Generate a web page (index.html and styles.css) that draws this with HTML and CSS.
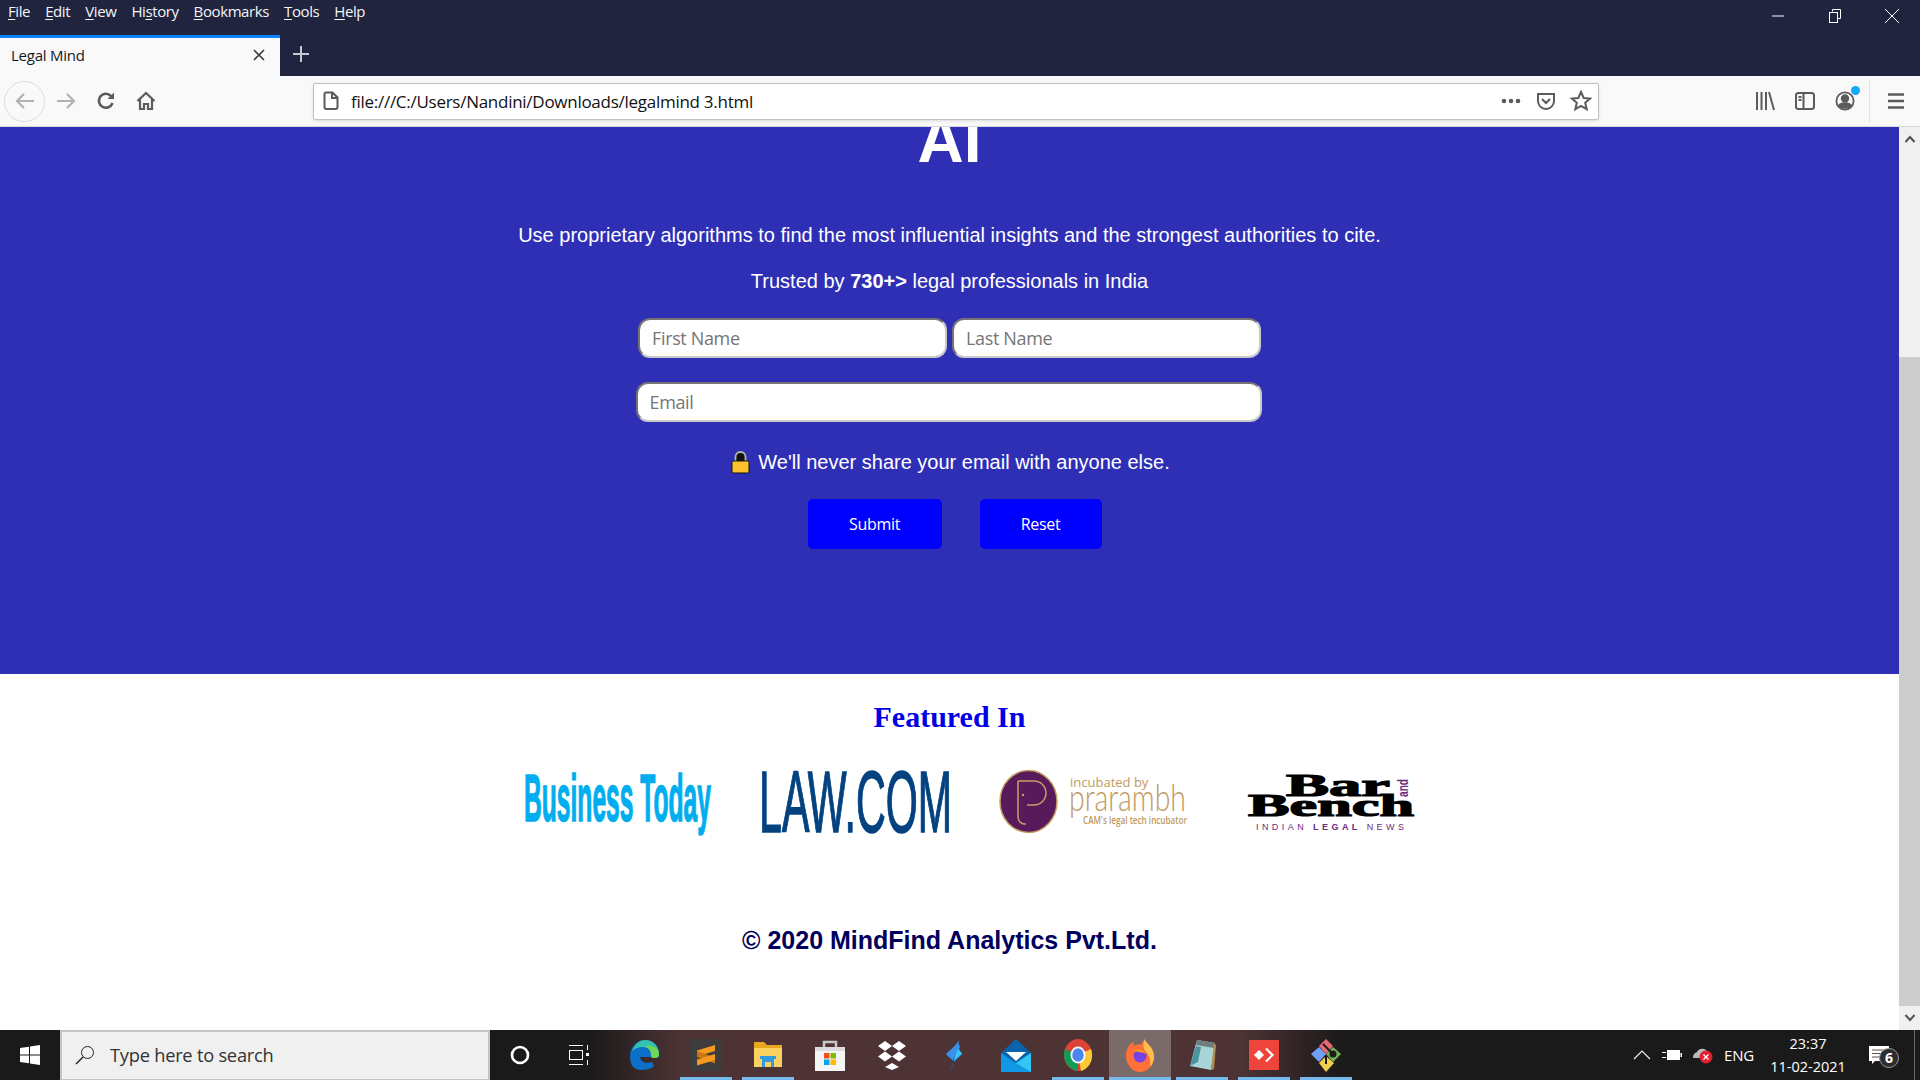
FILE: index.html
```html
<!DOCTYPE html>
<html lang="en">
<head>
<meta charset="utf-8">
<title>Legal Mind</title>
<link rel="stylesheet" href="styles.css">
</head>
<body>
<header class="menubar">
  <nav class="menus">
    <span><u>F</u>ile</span><span><u>E</u>dit</span><span><u>V</u>iew</span><span>Hi<u>s</u>tory</span><span><u>B</u>ookmarks</span><span><u>T</u>ools</span><span><u>H</u>elp</span>
  </nav>
  <div class="winctl">
    <svg width="16" height="16" viewBox="0 0 16 16"><path d="M2 8h12" stroke="#fff"/></svg>
    <svg width="16" height="16" viewBox="0 0 16 16" fill="none" stroke="#fff"><path d="M5.500 3.500V1.500h8v9h-3"/><rect x="2.500" y="4.500" width="8" height="10" fill="#20243f"/></svg>
    <svg width="16" height="16" viewBox="0 0 16 16"><path d="M1 1l14 14M15 1L1 15" stroke="#fff"/></svg>
  </div>
</header>
<div class="tabbar">
  <div class="tab">
    <span class="tab-title">Legal Mind</span>
    <svg width="14" height="14" viewBox="0 0 14 14"><path d="M2 2l10 10M12 2L2 12" stroke="#3a3a3c" stroke-width="1.600"/></svg>
  </div>
  <svg class="newtab" width="18" height="18" viewBox="0 0 18 18"><path d="M9 1v16M1 9h16" stroke="#c8c9d0" stroke-width="2"/></svg>
</div>
<div class="toolbar">
  <div class="navbtns">
    <span class="backring"><svg width="22" height="20" viewBox="0 0 22 20" fill="none" stroke="#b1b1b3" stroke-width="2.200"><path d="M20 10H3M10 3l-7 7 7 7"/></svg></span>
    <svg width="22" height="20" viewBox="0 0 22 20" fill="none" stroke="#b1b1b3" stroke-width="2.200"><path d="M2 10h17M12 3l7 7-7 7"/></svg>
    <svg width="20" height="20" viewBox="0 0 20 20" fill="none" stroke="#5b5b5d" stroke-width="2.600"><path d="M16.500 12a7 7 0 1 1-1.600-7.200L17 7"/><path d="M18 1.500V8h-6.500z" fill="#5b5b5d" stroke="none"/></svg>
    <svg width="20" height="20" viewBox="0 0 20 20" fill="none" stroke="#5b5b5d" stroke-width="2.200"><path d="M1.500 10L10 2l8.500 8M4 8v10h4v-5h4v5h4V8"/></svg>
  </div>
  <div class="urlbar">
    <svg width="16" height="20" viewBox="0 0 16 20" fill="none" stroke="#5b5b5d" stroke-width="2"><path d="M3 1.500h6.500L14.500 6.500V16a2 2 0 0 1-2 2h-9a2 2 0 0 1-2-2V3a1.500 1.500 0 0 1 1.500-1.500zM9 1.500V7h5.500"/></svg>
    <span class="url">file:///C:/Users/Nandini/Downloads/legalmind 3.html</span>
    <div class="url-actions">
      <svg width="20" height="6" viewBox="0 0 20 6" fill="#5b5b5d"><circle cx="3" cy="3" r="2.300"/><circle cx="10" cy="3" r="2.300"/><circle cx="17" cy="3" r="2.300"/></svg>
      <svg width="20" height="20" viewBox="0 0 20 20" fill="none" stroke="#5b5b5d" stroke-width="2"><path d="M2 3h16v7a8 8 0 0 1-16 0zM6 8l4 4 4-4"/></svg>
      <svg width="22" height="22" viewBox="0 0 22 22" fill="none" stroke="#5b5b5d" stroke-width="2"><path d="M11 2l2.700 6 6.300.6-4.800 4.200 1.500 6.400L11 15.800l-5.700 3.400 1.500-6.400L2 8.600 8.300 8z"/></svg>
    </div>
  </div>
  <div class="tools">
    <svg width="20" height="20" viewBox="0 0 20 20" stroke="#5b5b5d" stroke-width="2"><path d="M2 1v18M6.500 1v18M11 1v18M14 1l5 18"/></svg>
    <svg width="20" height="20" viewBox="0 0 20 20" fill="none" stroke="#5b5b5d" stroke-width="2"><rect x="1" y="2" width="18" height="16" rx="2.500"/><path d="M8.500 2v16M3.500 6h3M3.500 9h3"/></svg>
    <span class="account"><svg width="20" height="22" viewBox="0 0 20 22" fill="none" stroke="#5b5b5d" stroke-width="1.800"><circle cx="10" cy="11" r="8.600"/><circle cx="10" cy="8.500" r="3.300" fill="#5b5b5d"/><path d="M4 15.500c2-3 10-3 12 0-2 3-10 3-12 0z" fill="#5b5b5d"/></svg><i class="dot"></i></span>
    <i class="sep"></i>
    <svg width="18" height="18" viewBox="0 0 18 18" stroke="#5b5b5d" stroke-width="2.400"><path d="M1 2.500h16M1 9h16M1 15.500h16"/></svg>
  </div>
</div>
<main class="viewport">
  <div class="page">
    <section class="hero">
      <h1>AI</h1>
      <p class="lead">Use proprietary algorithms to find the most influential insights and the strongest authorities to cite.</p>
      <p class="trust">Trusted by <b>730+&gt;</b> legal professionals in India</p>
      <form class="signup">
        <div class="name-row">
          <input class="field" type="text" placeholder="First Name">
          <input class="field" type="text" placeholder="Last Name">
        </div>
        <input class="field email" type="text" placeholder="Email">
      </form>
      <p class="privacy">
        <svg width="19" height="24" viewBox="0 0 19 24"><path d="M4.500 12V7a5 5 0 0 1 10 0v5" fill="#111" stroke="#b7b7a8" stroke-width="1.800"/><rect x="1" y="11" width="17" height="12" rx="1.500" fill="#fcc22d" stroke="#111"/></svg>
        <span>We'll never share your email with anyone else.</span>
      </p>
      <div class="actions">
        <button class="btn submit" type="button">Submit</button>
        <button class="btn reset" type="button">Reset</button>
      </div>
    </section>
    <section class="featured">
      <h2>Featured In</h2>
      <div class="logos">
        <svg class="logo" viewBox="0 0 190 80"><text class="lg-bt" x="2" y="57" textLength="187" lengthAdjust="spacingAndGlyphs">Business Today</text></svg>
        <svg class="logo" viewBox="0 0 190 80"><text class="lg-law" x="-1" y="68" textLength="193" lengthAdjust="spacingAndGlyphs">LAW.COM</text></svg>
        <svg class="logo" viewBox="0 0 190 80">
          <ellipse cx="30.500" cy="37.500" rx="28.500" ry="31" fill="#591a5b" stroke="#c4a064" stroke-width="1.500"/>
          <path d="M20 17h16a12 12 0 0 1 0 24h-7M20 17v36a7 7 0 0 0 8 7" fill="none" stroke="#c4a064" stroke-width="1.500"/>
          <circle cx="25" cy="31" r="1.200" fill="#c4a064"/>
          <text class="lg-inc" x="72" y="23">incubated by</text>
          <text class="lg-pra" x="71" y="47" textLength="117" lengthAdjust="spacingAndGlyphs">prarambh</text>
          <text class="lg-cam" x="85" y="60" textLength="104" lengthAdjust="spacingAndGlyphs">CAM's legal tech incubator</text>
        </svg>
        <svg class="logo" viewBox="0 0 190 80">
          <text class="lg-bar" x="50" y="32" textLength="104" lengthAdjust="spacingAndGlyphs">Bar</text>
          <text class="lg-bar" x="12" y="52" textLength="166" lengthAdjust="spacingAndGlyphs">Bench</text>
          <text class="lg-and" transform="translate(172 33) rotate(-90)" textLength="18" lengthAdjust="spacingAndGlyphs">and</text>
          <text class="lg-news" x="20" y="66" textLength="150">INDIAN <tspan class="lg-legal">LEGAL</tspan> NEWS</text>
        </svg>
      </div>
      <p class="copyright">© 2020 MindFind Analytics Pvt.Ltd.</p>
    </section>
  </div>
  <aside class="scrollbar">
    <svg class="arrow" width="12" height="8" viewBox="0 0 12 8"><path d="M1.500 7L6 2l4.500 5" fill="none" stroke="#505050" stroke-width="2"/></svg>
    <div class="track"><div class="thumb"></div></div>
    <svg class="arrow" width="12" height="8" viewBox="0 0 12 8"><path d="M1.500 1L6 6l4.500-5" fill="none" stroke="#505050" stroke-width="2"/></svg>
  </aside>
</main>
<footer class="taskbar">
  <div class="start"><svg width="20" height="20" viewBox="0 0 20 20" fill="#fff"><path d="M0 3l9-1.300V9.500H0zM10 1.500L20 0v9.500H10zM0 10.500h9v7.800L0 17zM10 10.500h10V20l-10-1.500z"/></svg></div>
  <div class="search">
    <svg width="20" height="20" viewBox="0 0 20 20" fill="none" stroke="#222"><circle cx="12.500" cy="7.500" r="6"/><path d="M8 12L1 19" stroke-width="1.400"/></svg>
    <span>Type here to search</span>
  </div>
  <div class="sysbtn"><svg width="22" height="22" viewBox="0 0 22 22" fill="none" stroke="#fff" stroke-width="2.600"><circle cx="11" cy="11" r="8"/></svg></div>
  <div class="sysbtn"><svg width="22" height="22" viewBox="0 0 22 22" fill="none" stroke="#fff"><path d="M1 1.500h14M1 20.500h14M19.500 1v5M19.500 16v5"/><rect x="1.500" y="6.500" width="13" height="9"/><rect x="18" y="9" width="3" height="3" fill="#fff" stroke="none"/></svg></div>
  <div class="apps">
    <div class="app"><svg width="32" height="32" viewBox="0 0 32 32"><path d="M2 18C2 7 10 1 17 1c8 0 14 6 14 14v3H12c1 5 6 7 12 5l2 4c-3 3-8 4-13 4C6 31 2 26 2 18z" fill="#0c70c8"/><path d="M4 12C7 4 13 1 17 1c8 0 14 6 14 14 0 3-2 4-5 4-3 0-3-2-3-4 0-4-4-7-8-7-5 0-9 2-11 4z" fill="#35c1b1"/><path d="M31 15c0 3-2 4-5 4-3 0-3-2-3-4 0-4-3-7-7-8 8-2 15 2 15 8z" fill="#6fd64f"/></svg></div>
    <div class="app open"><svg width="32" height="32" viewBox="0 0 32 32"><rect width="32" height="32" rx="3" fill="#3d3d3d"/><path d="M7 11.500L25 6v6L7 17.500z" fill="#f49a1c"/><path d="M7 12l18 6.500v6L7 18z" fill="#c9760f"/><path d="M7 20.500L25 15v6L7 26.500z" fill="#f49a1c"/></svg></div>
    <div class="app open"><svg width="30" height="30" viewBox="0 0 30 30"><path d="M1 2h10l3 3h15v22H1z" fill="#e9a71d"/><path d="M1 8h28v19H1z" fill="#fbd25f"/><path d="M9 27V18h12v9h-3v-5h-6v5z" fill="#2f9ae0"/><path d="M7 16h16v3H7z" fill="#2f9ae0"/></svg></div>
    <div class="app"><svg width="30" height="32" viewBox="0 0 30 32"><path d="M9 8V3h12v5" fill="none" stroke="#c7c7c7" stroke-width="2.500"/><path d="M0 8h30v24H0z" fill="#f5f5f5"/><rect y="8" width="30" height="4" fill="#dcdcdc"/><rect x="9" y="14" width="5.500" height="5.500" fill="#f25022"/><rect x="15.500" y="14" width="5.500" height="5.500" fill="#7fba00"/><rect x="9" y="20.500" width="5.500" height="5.500" fill="#00a4ef"/><rect x="15.500" y="20.500" width="5.500" height="5.500" fill="#ffb900"/></svg></div>
    <div class="app"><svg width="30" height="30" viewBox="0 0 30 30" fill="#fff"><path d="M8 1l7 5-7 5-7-5zM22 1l7 5-7 5-7-5zM8 11.500l7 5-7 5-7-5zM22 11.500l7 5-7 5-7-5zM15 23l7 4-7 3-7-3z"/></svg></div>
    <div class="app"><svg width="16" height="32" viewBox="0 0 16 32"><path d="M13 0C12 5 6 9 0 15c2 3 5 4 7 7 1-5 5-8 7-14-1-2-2-5-1-8z" fill="#3a8fe8"/><path d="M4 32c1-6 6-11 12-17-1-2-3-4-4-6-1 5-4 9-4 13 0 4-3 6-4 10z" fill="#2275d8"/><path d="M12 9c1 2 3 4 4 6-4 4-7 5-8 7 0-4 3-8 4-13z" fill="#35c6f4"/></svg></div>
    <div class="app"><svg width="30" height="34" viewBox="0 0 30 34"><path d="M0 15L15 1l15 14v19H0z" fill="#0b62ad"/><path d="M5 14h20L15 23z" fill="#fff"/><path d="M0 15l15 10 15-10v19H0z" fill="#1296e6"/><path d="M15 25l15-10v19z" fill="#31c6f5"/></svg></div>
    <div class="app open"><svg width="30" height="32" viewBox="0 0 30 32"><ellipse cx="15" cy="16" rx="14" ry="16" fill="#db4437"/><path d="M15 16L2 10C-1 18 3 30 15 32z" fill="#109d58"/><path d="M15 16l3 16c10-3 13-14 10-22z" fill="#fcc934"/><ellipse cx="15" cy="16" rx="7.500" ry="8.500" fill="#fff"/><ellipse cx="15" cy="16" rx="5.800" ry="6.800" fill="#4f86ec"/></svg></div>
    <div class="app open active"><svg width="30" height="34" viewBox="0 0 30 34"><path d="M1 18C1 10 5 5 9 4c-1 2-1 3 0 4 3-2 5-2 7-1 1-2 2-4 4-6 0 2 1 3 4 6 3 3 5 7 5 12 0 8-6 15-14 15S1 26 1 18z" fill="#ff7139"/><path d="M20 1c0 2 1 3 4 6 3 3 5 7 5 12 0 4-2 8-4 10 1-6 0-12-5-16-2-3-2-8 0-12z" fill="#ffbd4f"/><circle cx="15" cy="18" r="6.500" fill="#7542e5"/><path d="M8 13c5-3 11-2 13 3-4-2-8-2-13-3z" fill="#ff980e"/></svg></div>
    <div class="app open"><svg width="28" height="34" viewBox="0 0 28 34"><path d="M9 2l18 3-4 27-21-4z" fill="#a8d5d8"/><path d="M9 2l18 3-1 5-18-3z" fill="#6d7d80"/><path d="M8 8L2 28l8-4 3-15z" fill="#4a93a0"/><path d="M26 6l-3 26 3-1 2-24z" fill="#b58e4c"/></svg></div>
    <div class="app open"><svg width="30" height="30" viewBox="0 0 30 30"><rect width="30" height="30" fill="#ef443b"/><path d="M5 15l5-5 5 5-5 5z" fill="#fff"/><path d="M16 9l6 6-6 6 2 1 7-7-7-7z" fill="#fff"/></svg></div>
    <div class="app open"><svg width="30" height="34" viewBox="0 0 30 34"><path d="M8 9l7 7-7 8-8-8z" fill="#6f9ff7"/><path d="M22 9l8 7-8 8-7-8z" fill="#71b356"/><path d="M15 1l7 7-7 8-7-8z" fill="#e66a74"/><path d="M15 18l8 7-8 9-7-9z" fill="#f1ce4c"/><circle cx="22" cy="16" r="3.500" fill="#1c1c1c"/><path d="M12 6l8 8M15 18v8" stroke="#1c1c1c" stroke-width="2"/></svg></div>
  </div>
  <div class="tray">
    <svg class="tray-chev" width="18" height="10" viewBox="0 0 18 10" fill="none" stroke="#eee" stroke-width="1.200"><path d="M1 9l8-8 8 8"/></svg>
    <svg class="tray-batt" width="20" height="12" viewBox="0 0 20 12"><path d="M0 3.500h4M0 8.500h4" stroke="#fff"/><rect x="5.500" y="1.500" width="12" height="9" fill="#fff" stroke="#fff"/><rect x="18.500" y="4" width="1.500" height="4" fill="#fff"/></svg>
    <svg width="22" height="18" viewBox="0 0 22 18"><path d="M2 12a6 6 0 0 1 4-6 6 6 0 0 1 11 1 3 3 0 0 1 1 5z" fill="#bbb"/><circle cx="15" cy="11" r="6.500" fill="#e21f33"/><path d="M12.500 8.500l5 5M17.500 8.500l-5 5" stroke="#fff" stroke-width="1.400"/></svg>
    <span class="lang">ENG</span>
    <div class="clock"><span>23:37</span><span>11-02-2021</span></div>
    <div class="notify">
      <svg width="20" height="18" viewBox="0 0 20 18"><path d="M0 0h20v15H6l-3 3v-3H0z" fill="#fff"/><path d="M3 4h14M3 7.500h14M3 11h9" stroke="#555"/></svg>
      <span class="badge">6</span>
    </div>
    <i class="desk-line"></i>
  </div>
</footer>
</body>
</html>
```

FILE: styles.css
```css
* { box-sizing: border-box; }
html, body { margin: 0; height: 100%; }
body {
  display: flex;
  flex-direction: column;
  height: 1080px;
  overflow: hidden;
  font-family: "Liberation Sans", Arial, sans-serif;
  background: #fff;
}
svg { display: block; flex: none; }

.menubar {
  height: 35px;
  flex: none;
  background: #20243f;
  display: flex;
  align-items: flex-start;
  justify-content: space-between;
  color: #f4f4f6;
  font: 15px/23px "Open Sans", sans-serif;
}
.menus { display: flex; gap: 15px; padding-left: 8px; letter-spacing: -.4px; }
.menus u { text-underline-offset: 2px; }
.winctl { display: flex; gap: 41px; padding: 8px 20px 0 0; }

.tabbar { height: 41px; flex: none; background: #20243f; display: flex; align-items: stretch; }
.tab {
  width: 280px;
  background: #f9f9fa;
  border-top: 3px solid #0a84ff;
  display: flex;
  align-items: center;
  justify-content: space-between;
  padding: 0 14px 4px 11px;
  font: 15px "Open Sans", sans-serif;
  color: #18181a;
  letter-spacing: -.25px;
}
.newtab { align-self: center; margin: 0 0 4px 12px; }

.toolbar {
  height: 51px;
  flex: none;
  background: #f9f9fa;
  border-bottom: 1px solid #d8d8da;
  display: flex;
  align-items: center;
}
.navbtns { display: flex; align-items: center; gap: 19.500px; width: 313px; padding-left: 4px; }
.backring {
  width: 41px;
  height: 41px;
  border: 1px solid #dcdcde;
  border-radius: 50%;
  display: flex;
  align-items: center;
  justify-content: center;
  margin-right: -10px;
}
.urlbar {
  width: 1286px;
  height: 37px;
  background: #fff;
  border: 1px solid #c0c0c2;
  border-radius: 2px;
  display: flex;
  align-items: center;
  padding: 0 6px 0 9px;
  box-shadow: 0 1px 3px rgba(0,0,0,.12);
}
.url { margin-left: 12px; font: 17px "Open Sans", sans-serif; color: #111; letter-spacing: -.27px; }
.url-actions { margin-left: auto; display: flex; align-items: center; gap: 14.500px; }
.tools { display: flex; align-items: center; gap: 20px; padding-left: 155.500px; }
.account { position: relative; display: block; }
.dot { position: absolute; right: -5px; top: -4px; width: 9px; height: 9px; border-radius: 50%; background: #0fa9ff; }
.sep { width: 1px; height: 42px; background: #e2e2e4; margin: 0 -3px 0 -6px; }

.viewport { flex: 1; display: flex; min-height: 0; }
.page { flex: 1; min-width: 0; overflow: hidden; background: #fff; }

.hero {
  height: 547px;
  background: #2f2fb6;
  color: #fff;
  display: flex;
  flex-direction: column;
  align-items: center;
}
.hero h1 { margin: -17px 0 0; font-size: 64px; line-height: 60px; font-weight: 700; }
.lead { margin: 50px 0 0; font-size: 20px; line-height: 30px; }
.trust { margin: 16px 0 0; font-size: 20px; line-height: 30px; }
.signup { margin: 22px 2px 0 0; display: flex; flex-direction: column; align-items: center; gap: 24px; }
.name-row { display: flex; gap: 5px; margin-left: 2px; }
.field {
  width: 309px;
  height: 40px;
  border-radius: 12px;
  border: 2px inset #c8c8c8;
  background: #fff;
  padding: 0 12px;
  font: 18px "Open Sans", sans-serif;
  outline: none;
}
.field::placeholder { color: #757575; opacity: 1; letter-spacing: -.35px; }
.email { width: 626px; }
.privacy { margin: 25px 0 0 2px; display: flex; align-items: center; gap: 8px; font-size: 20px; line-height: 30px; height: 30px; }
.actions { margin: 22px 0 0 10px; display: flex; gap: 38px; }
.btn {
  height: 50px;
  border: 0;
  border-radius: 5px;
  background: #0000ff;
  color: #fff;
  font: 16px "Open Sans", sans-serif;
  letter-spacing: -.3px;
}
.submit { width: 134px; }
.reset { width: 122px; }

.featured { display: flex; flex-direction: column; align-items: center; padding-top: 25px; }
.featured h2 { margin: 0; font: 700 30px/36px "Liberation Serif", serif; color: #0000e6; }
.logos { display: flex; gap: 48px; padding-left: 48px; margin-top: 29px; }
.logo { width: 190px; height: 80px; }
.lg-bt { font: 700 66px "Liberation Sans", sans-serif; fill: #00aeef; stroke: #00aeef; stroke-width: 1.500px; }
.lg-law { font: 400 88px "Liberation Sans", sans-serif; fill: #03427f; stroke: #03427f; stroke-width: 1.500px; }
.lg-inc { font: 13px "Open Sans", sans-serif; fill: #bf9a62; }
.lg-pra { font: 300 37px "Lato", sans-serif; fill: #bf9a62; }
.lg-cam { font: 600 10px "Open Sans", sans-serif; fill: #bf9a62; }
.lg-bar { font: 700 32px "Liberation Serif", serif; fill: #000; stroke: #000; stroke-width: 1.200px; }
.lg-and { font: 700 15px "Liberation Sans", sans-serif; fill: #6b2a7d; }
.lg-news { font: 9px "Liberation Sans", sans-serif; fill: #6b2a7d; letter-spacing: 2px; }
.lg-legal { font-weight: 700; }
.copyright { margin: 81px 0 0; font-size: 25px; line-height: 30px; font-weight: 700; color: #00005c; }

.scrollbar { width: 21px; flex: none; background: #f0f0f0; display: flex; flex-direction: column; align-items: center; }
.arrow { margin: 8px 0; }
.track { flex: 1; width: 100%; padding-top: 206px; }
.thumb { width: 100%; height: 100%; background: #cdcdcd; }

.taskbar {
  height: 50px;
  flex: none;
  display: flex;
  align-items: stretch;
  background: linear-gradient(90deg, #1a1a1a 0, #1a1a1a 590px, #4d3334 680px, #4d3334 1240px, #1c1a1a 1340px, #1a1a1a 100%);
  color: #fff;
}
.start { width: 60px; display: flex; align-items: center; justify-content: center; }
.search {
  width: 430px;
  background: #f0f0f0;
  border: 2px solid #c4c4c4;
  border-bottom-width: 1px;
  display: flex;
  align-items: center;
  gap: 15px;
  padding: 0 0 2px 13px;
  color: #333;
  font: 18.300px "Open Sans", sans-serif;
  letter-spacing: -.25px;
}
.sysbtn { width: 60px; display: flex; align-items: center; justify-content: center; margin-right: -1px; }
.apps { display: flex; margin-left: 5px; }
.app { position: relative; width: 62px; display: flex; align-items: center; justify-content: center; }
.app.open::after { content: ""; position: absolute; left: 5px; right: 5px; bottom: 0; height: 3px; background: #76b9ed; }
.app.active { background: #7b6a6a; }
.app.active::after { left: 0; right: 0; }
.tray { margin-left: auto; display: flex; align-items: center; padding-right: 22px; position: relative; font: 14.500px "Open Sans", sans-serif; }
.tray-chev { margin-right: 11px; }
.tray-batt { margin-right: 9px; }
.lang { margin-left: 11px; width: 40px; font-size: 15px; letter-spacing: -.2px; }
.clock { width: 86px; margin-left: 1px; display: flex; flex-direction: column; align-items: center; line-height: 23px; }
.notify { position: relative; width: 45px; margin-left: 2px; display: flex; padding-left: 16px; }
.badge {
  position: absolute;
  left: 26px;
  top: 2px;
  width: 20px;
  height: 20px;
  border-radius: 50%;
  background: #2d2d2d;
  border: 1px solid #999;
  font: 700 14px/18px "Open Sans", sans-serif;
  text-align: center;
}
.desk-line { position: absolute; right: 5px; top: 0; bottom: 0; width: 1px; background: #6a6a6a; }
```
